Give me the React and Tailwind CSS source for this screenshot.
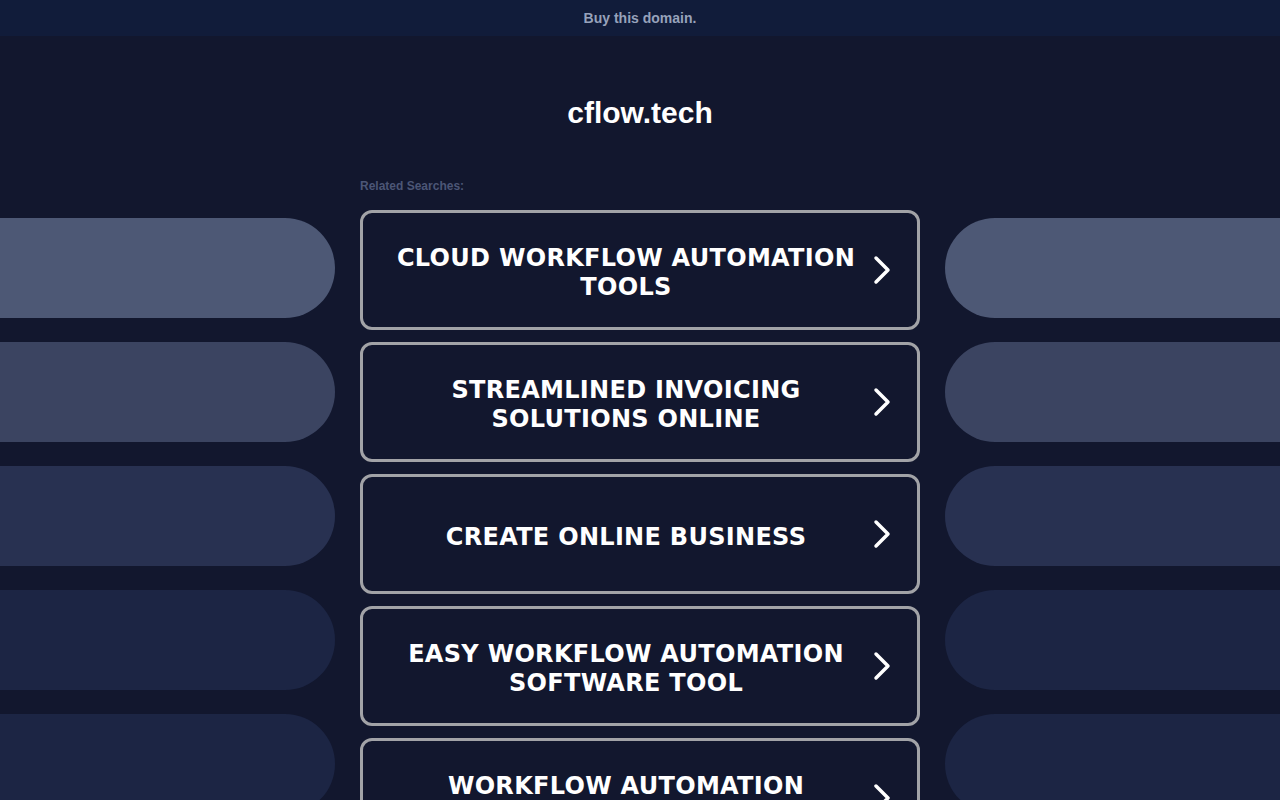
import React from 'react';

const searches = [
    ['CLOUD WORKFLOW AUTOMATION', 'TOOLS'],
    ['STREAMLINED INVOICING', 'SOLUTIONS ONLINE'],
    ['CREATE ONLINE BUSINESS'],
    ['EASY WORKFLOW AUTOMATION', 'SOFTWARE TOOL'],
    ['WORKFLOW AUTOMATION', 'SOFTWARE'],
];

const pillColors = ['bg-[#4d5875]', 'bg-[#3b4461]', 'bg-[#283151]', 'bg-[#1c2544]', 'bg-[#1c2544]'];

const Chevron = () => (
    <svg className="w-[20px] h-[30px] shrink-0" viewBox="0 0 20 30" fill="none" stroke="white" strokeWidth={3.5} strokeLinecap="round" strokeLinejoin="round">
        <path d="M4 3 L16 15 L4 27" />
    </svg>
);

const SidePills = ({ side }) => (
    <div className="flex flex-col gap-[24px] pt-[8px]">
        {pillColors.map((c, i) => (
            <div key={i} className={`h-[100px] ${c} ${side === 'left' ? 'rounded-r-full' : 'rounded-l-full'}`}></div>
        ))}
    </div>
);

export default function App() {
    return (
        <div className="h-[800px] overflow-hidden bg-[#12172e]" style={{ fontFamily: '"Liberation Sans", Arial, sans-serif' }}>
            {/* top bar */}
            <div className="h-[36px] bg-[#111c3a] flex items-center justify-center">
                <span className="text-[14px] font-bold text-[#97a2bb]">Buy this domain.</span>
            </div>

            <h1 className="text-center text-[30px] font-bold text-white mt-[59px] leading-[36px]">cflow.tech</h1>

            <div className="grid grid-cols-[1fr_560px_1fr] gap-x-[25px] mt-[47px]">
                <div></div>
                <p className="text-[12px] leading-[16px] font-bold text-[#4c5676] mb-[16px]">Related Searches:</p>
                <div></div>

                <SidePills side="left" />

                {/* cards */}
                <div className="flex flex-col gap-[12px]">
                    {searches.map((lines, i) => (
                        <div key={i} className="h-[120px] shrink-0 rounded-[12px] border-[3px] border-[#a2a3a7] bg-[#12172e] flex items-center pl-[27px] pr-[25px]">
                            <div
                                className="flex-1 text-center text-white font-bold text-[24px] leading-[29px] tracking-[0.3px] pr-[10px] pt-[6px]"
                                style={{ fontFamily: '"DejaVu Sans", Verdana, sans-serif' }}
                            >
                                {lines.map((l, j) => (
                                    <div key={j}>{l}</div>
                                ))}
                            </div>
                            <Chevron />
                        </div>
                    ))}
                </div>

                <SidePills side="right" />
            </div>
        </div>
    );
}
